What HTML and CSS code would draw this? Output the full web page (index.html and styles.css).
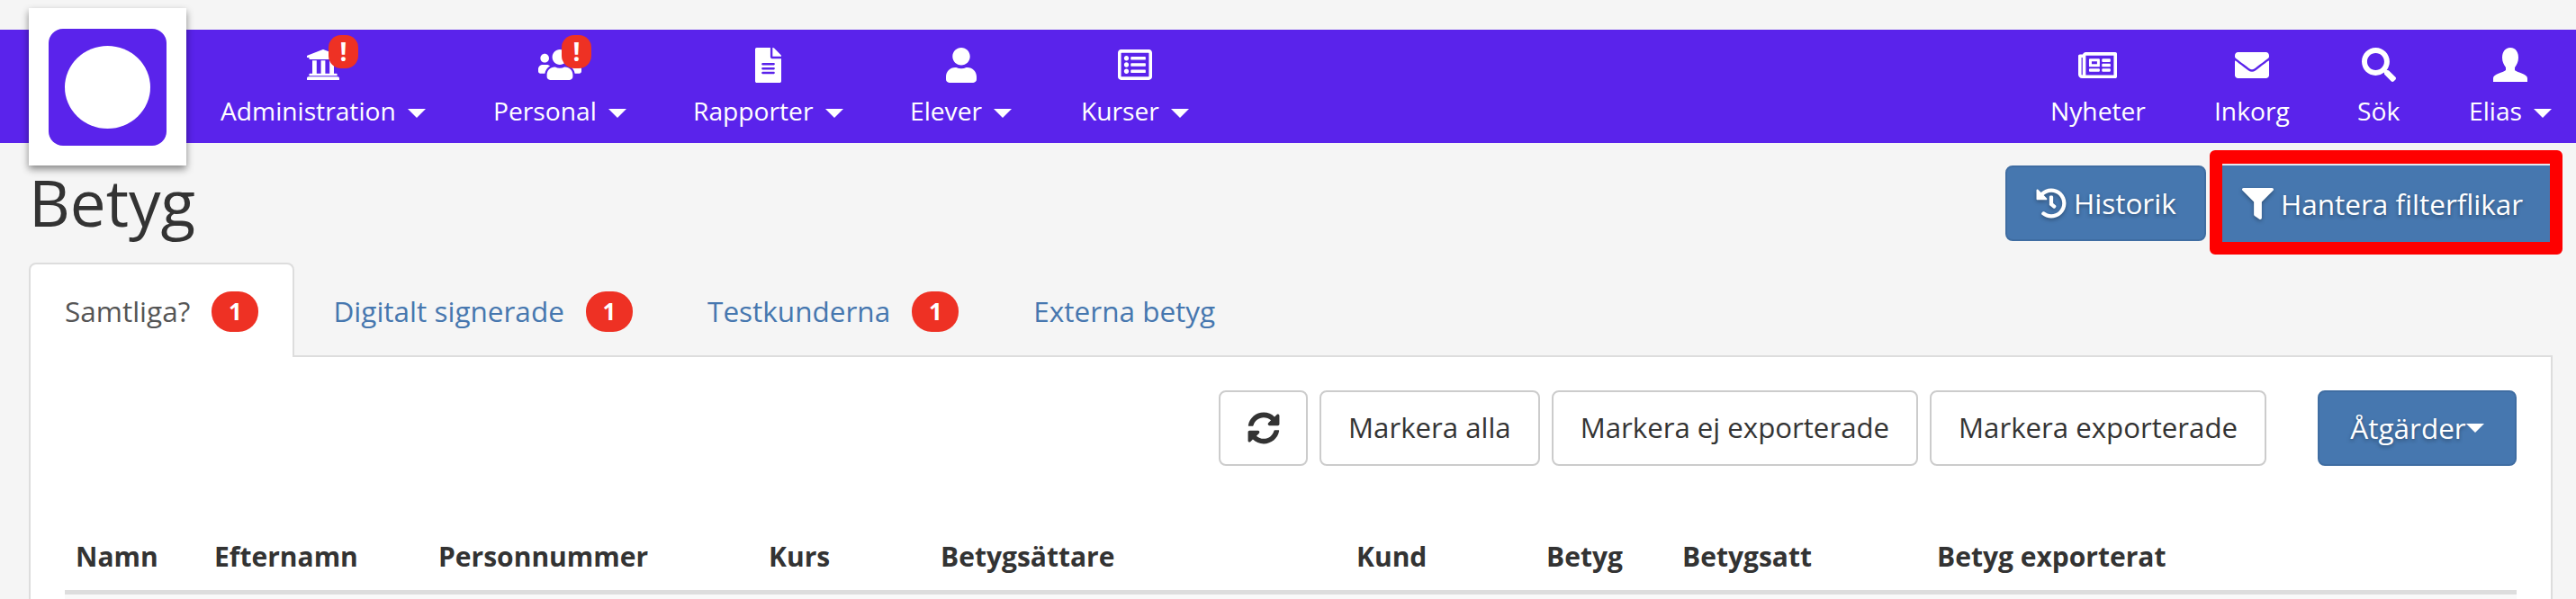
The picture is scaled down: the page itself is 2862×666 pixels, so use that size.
FILE: index.html
```html
<!DOCTYPE html>
<html lang="sv">
<head>
<meta charset="utf-8">
<title>Betyg</title>
<link rel="stylesheet" href="styles.css">
</head>
<body>
<header class="navbar">
  <a class="brand"><span class="brand-mark"><span class="brand-dot"></span></span></a>
  <nav class="menu">
    <a class="item"><span class="ico"><svg class="flag-uni" width="36" height="34" viewBox="16 32 480 448" preserveAspectRatio="none"><path fill="#fff" d="M496 128v16a8 8 0 0 1-8 8h-24v12c0 6.627-5.373 12-12 12H60c-6.627 0-12-5.373-12-12v-12H24a8 8 0 0 1-8-8v-16a8 8 0 0 1 4.941-7.392l232-88a7.996 7.996 0 0 1 6.118 0l232 88A8 8 0 0 1 496 128zm-24 304H40c-13.255 0-24 10.745-24 24v16a8 8 0 0 0 8 8h464a8 8 0 0 0 8-8v-16c0-13.255-10.745-24-24-24zM96 192v192H60c-6.627 0-12 5.373-12 12v20h416v-20c0-6.627-5.373-12-12-12h-36V192h-64v192h-64V192h-64v192h-64V192H96z"/></svg><b class="alert alert-a">!</b></span><span class="lab">Administration <i class="caret"></i></span></a>
    <a class="item"><span class="ico"><svg width="48" height="34" viewBox="0 32 640 448" preserveAspectRatio="none"><path fill="#fff" d="M96 224c35.300 0 64-28.700 64-64s-28.700-64-64-64-64 28.700-64 64 28.700 64 64 64zm448 0c35.300 0 64-28.700 64-64s-28.700-64-64-64-64 28.700-64 64 28.700 64 64 64zm32 32h-64c-17.600 0-33.500 7.100-45.100 18.600 40.300 22.100 68.900 62 75.100 109.400h66c17.700 0 32-14.300 32-32v-32c0-35.300-28.700-64-64-64zm-256 0c61.900 0 112-50.100 112-112S381.900 32 320 32 208 82.100 208 144s50.100 112 112 112zm76.800 32h-8.300c-20.800 10-43.900 16-68.500 16s-47.600-6-68.500-16h-8.300C179.600 288 128 339.600 128 403.200V432c0 26.500 21.500 48 48 48h288c26.500 0 48-21.500 48-48v-28.800c0-63.600-51.600-115.200-115.200-115.200zm-223.700-13.400C161.500 263.100 145.600 256 128 256H64c-35.300 0-64 28.700-64 64v32c0 17.700 14.300 32 32 32h65.900c6.300-47.400 34.900-87.300 75.200-109.400z"/></svg><b class="alert alert-p">!</b></span><span class="lab">Personal <i class="caret"></i></span></a>
    <a class="item"><span class="ico"><svg width="29" height="39" viewBox="0 0 384 512" preserveAspectRatio="none"><path fill="#fff" d="M224 136V0H24C10.700 0 0 10.700 0 24v464c0 13.300 10.700 24 24 24h336c13.300 0 24-10.700 24-24V160H248c-13.200 0-24-10.800-24-24zm64 236c0 6.600-5.400 12-12 12H108c-6.600 0-12-5.400-12-12v-8c0-6.600 5.400-12 12-12h168c6.600 0 12 5.400 12 12v8zm0-64c0 6.600-5.400 12-12 12H108c-6.600 0-12-5.400-12-12v-8c0-6.600 5.400-12 12-12h168c6.600 0 12 5.400 12 12v8zm0-72v8c0 6.600-5.400 12-12 12H108c-6.600 0-12-5.400-12-12v-8c0-6.600 5.400-12 12-12h168c6.600 0 12 5.400 12 12zm96-114.100v6.100H256V0h6.100c6.400 0 12.500 2.500 17 7l97.900 98c4.500 4.500 7 10.600 7 16.900z"/></svg></span><span class="lab">Rapporter <i class="caret"></i></span></a>
    <a class="item"><span class="ico"><svg width="34" height="39" viewBox="0 0 448 512" preserveAspectRatio="none"><path fill="#fff" d="M224 256c70.700 0 128-57.300 128-128S294.700 0 224 0 96 57.300 96 128s57.300 128 128 128zm89.600 32h-16.700c-22.200 10.200-46.900 16-72.900 16s-50.600-5.800-72.900-16h-16.700C60.200 288 0 348.200 0 422.400V464c0 26.500 21.500 48 48 48h352c26.500 0 48-21.500 48-48v-41.600c0-74.200-60.200-134.400-134.400-134.400z"/></svg></span><span class="lab">Elever <i class="caret"></i></span></a>
    <a class="item"><span class="ico"><svg width="38" height="34" viewBox="0 32 512 448" preserveAspectRatio="none"><path fill="#fff" d="M464 32H48C21.490 32 0 53.490 0 80v352c0 26.510 21.490 48 48 48h416c26.510 0 48-21.490 48-48V80c0-26.510-21.490-48-48-48zm-6 400H54a6 6 0 0 1-6-6V86a6 6 0 0 1 6-6h404a6 6 0 0 1 6 6v340a6 6 0 0 1-6 6zm-42-92v24c0 6.627-5.373 12-12 12H204c-6.627 0-12-5.373-12-12v-24c0-6.627 5.373-12 12-12h200c6.627 0 12 5.373 12 12zm0-96v24c0 6.627-5.373 12-12 12H204c-6.627 0-12-5.373-12-12v-24c0-6.627 5.373-12 12-12h200c6.627 0 12 5.373 12 12zm0-96v24c0 6.627-5.373 12-12 12H204c-6.627 0-12-5.373-12-12v-24c0-6.627 5.373-12 12-12h200c6.627 0 12 5.373 12 12zm-252 12c0 19.882-16.118 36-36 36s-36-16.118-36-36 16.118-36 36-36 36 16.118 36 36zm0 96c0 19.882-16.118 36-36 36s-36-16.118-36-36 16.118-36 36-36 36 16.118 36 36zm0 96c0 19.882-16.118 36-36 36s-36-16.118-36-36 16.118-36 36-36 36 16.118 36 36z"/></svg></span><span class="lab">Kurser <i class="caret"></i></span></a>
  </nav>
  <nav class="menu menu-right">
    <a class="item"><span class="ico"><svg width="43" height="29" viewBox="0 64 576 384" preserveAspectRatio="none"><path fill="#fff" d="M552 64H112c-20.858 0-38.643 13.377-45.248 32H24c-13.255 0-24 10.745-24 24v272c0 30.928 25.072 56 56 56h496c13.255 0 24-10.745 24-24V88c0-13.255-10.745-24-24-24zM48 392V144h16v248c0 4.411-3.589 8-8 8s-8-3.589-8-8zm480 8H111.422c.374-2.614.578-5.283.578-8V112h416v288zM172 280h136c6.627 0 12-5.373 12-12v-96c0-6.627-5.373-12-12-12H172c-6.627 0-12 5.373-12 12v96c0 6.627 5.373 12 12 12zm28-80h80v40h-80v-40zm-40 140v-24c0-6.627 5.373-12 12-12h136c6.627 0 12 5.373 12 12v24c0 6.627-5.373 12-12 12H172c-6.627 0-12-5.373-12-12zm192 0v-24c0-6.627 5.373-12 12-12h104c6.627 0 12 5.373 12 12v24c0 6.627-5.373 12-12 12H364c-6.627 0-12-5.373-12-12zm0-144v-24c0-6.627 5.373-12 12-12h104c6.627 0 12 5.373 12 12v24c0 6.627-5.373 12-12 12H364c-6.627 0-12-5.373-12-12zm0 72v-24c0-6.627 5.373-12 12-12h104c6.627 0 12 5.373 12 12v24c0 6.627-5.373 12-12 12H364c-6.627 0-12-5.373-12-12z"/></svg></span><span class="lab">Nyheter</span></a>
    <a class="item"><span class="ico"><svg width="38" height="29" viewBox="0 64 512 384" preserveAspectRatio="none"><path fill="#fff" d="M502.300 190.800c3.900-3.100 9.700-.2 9.700 4.700V400c0 26.500-21.500 48-48 48H48c-26.500 0-48-21.500-48-48V195.600c0-5 5.700-7.800 9.700-4.700 22.400 17.400 52.100 39.500 154.100 113.600 21.100 15.400 56.700 47.800 92.200 47.600 35.700.3 72-32.800 92.300-47.600 102-74.100 131.600-96.300 154-113.700zM256 320c23.200.4 56.600-29.200 73.400-41.400 132.700-96.300 142.800-104.700 173.400-128.700 5.800-4.500 9.200-11.500 9.200-18.900v-19c0-26.500-21.500-48-48-48H48C21.500 64 0 85.500 0 112v19c0 7.400 3.400 14.300 9.200 18.900 30.600 23.900 40.700 32.400 173.400 128.700 16.800 12.200 50.200 41.800 73.400 41.400z"/></svg></span><span class="lab">Inkorg</span></a>
    <a class="item"><span class="ico"><svg width="38" height="38" viewBox="0 0 512 512"><path fill="#fff" d="M505 442.700L405.300 343c-4.500-4.500-10.600-7-17-7H372c27.600-35.300 44-79.700 44-128C416 93.100 322.900 0 208 0S0 93.100 0 208s93.100 208 208 208c48.300 0 92.700-16.400 128-44v16.300c0 6.400 2.500 12.500 7 17l99.700 99.700c9.400 9.400 24.600 9.400 33.900 0l28.300-28.300c9.400-9.400 9.400-24.600.1-34zM208 336c-70.700 0-128-57.200-128-128 0-70.700 57.200-128 128-128 70.700 0 128 57.200 128 128 0 70.700-57.200 128-128 128z"/></svg></span><span class="lab">Sök</span></a>
    <a class="item"><span class="ico"><svg width="38" height="38" viewBox="0 0 38 38"><path fill="#fff" d="M19 0c6 0 9 5 9 11 0 5-2 8-4 11v3c3 3 14 4 14 9v4H0v-4c0-5 11-6 14-9v-3c-2-3-4-6-4-11 0-6 3-11 9-11z"/></svg></span><span class="lab">Elias <i class="caret"></i></span></a>
  </nav>
</header>

<div class="title-row">
  <h1 class="title">Betyg</h1>
  <div class="title-actions">
    <button class="btn btn-blue btn-shadow btn-hist"><svg class="btn-ico" width="34" height="34" viewBox="0 0 512 512"><path fill="#fff" d="M504 255.531c.253 136.640-111.180 248.372-247.820 248.468-59.015.042-113.223-20.530-155.822-54.911-11.077-8.940-11.905-25.541-1.839-35.607l11.267-11.267c8.609-8.609 22.353-9.551 31.891-1.984C173.062 425.135 212.781 440 256 440c101.705 0 184-82.311 184-184 0-101.705-82.311-184-184-184-48.814 0-93.149 18.969-126.068 49.932l50.754 50.754c10.080 10.080 2.941 27.314-11.313 27.314H24c-8.837 0-16-7.163-16-16V38.627c0-14.254 17.234-21.393 27.314-11.314l49.372 49.372C129.209 34.136 189.552 8 256 8c136.810 0 247.747 110.780 248 247.531zm-180.912 78.784l9.823-12.630c8.138-10.463 6.253-25.542-4.210-33.679L288 256.349V152c0-13.255-10.745-24-24-24h-16c-13.255 0-24 10.745-24 24v135.651l65.409 50.874c10.463 8.137 25.541 6.253 33.679-4.210z"/></svg>Historik</button>
    <span class="marked"><button class="btn btn-blue btn-shadow btn-filter"><svg class="btn-ico" width="35" height="35" viewBox="0 0 512 512"><path fill="#fff" d="M487.976 0H24.028C2.710 0-8.047 25.866 7.058 40.971L192 225.941V432c0 7.831 3.821 15.170 10.237 19.662l80 55.980C298.020 518.690 320 507.493 320 487.980V225.941l184.947-184.970C520.021 25.896 509.338 0 487.976 0z"/></svg>Hantera filterflikar</button></span>
  </div>
</div>

<ul class="tabs">
  <li class="tab tab-on">Samtliga? <span class="count">1</span></li>
  <li class="tab">Digitalt signerade <span class="count">1</span></li>
  <li class="tab">Testkunderna <span class="count">1</span></li>
  <li class="tab">Externa betyg</li>
</ul>

<section class="panel">
  <div class="toolbar">
    <button class="btn btn-plain btn-icon"><svg width="36" height="36" viewBox="0 0 512 512"><path fill="#333" d="M370.720 133.280C339.458 104.008 298.888 87.962 255.848 88c-77.458.068-144.328 53.178-162.791 126.850-1.344 5.363-6.122 9.150-11.651 9.150H24.103c-7.498 0-13.194-6.807-11.807-14.176C33.933 94.924 134.813 8 256 8c66.448 0 126.791 26.136 171.315 68.685L463.030 40.970C478.149 25.851 504 36.559 504 57.941V192c0 13.255-10.745 24-24 24H345.941c-21.382 0-32.090-25.851-16.971-40.971l41.750-41.749zM32 296h134.059c21.382 0 32.090 25.851 16.971 40.971l-41.750 41.750c31.262 29.273 71.835 45.319 114.876 45.280 77.418-.070 144.315-53.144 162.787-126.849 1.344-5.363 6.122-9.150 11.651-9.150h57.304c7.498 0 13.194 6.807 11.807 14.176C478.067 417.076 377.187 504 256 504c-66.448 0-126.791-26.136-171.315-68.685L48.970 471.030C33.851 486.149 8 475.441 8 454.059V320c0-13.255 10.745-24 24-24z"/></svg></button>
    <button class="btn btn-plain">Markera alla</button>
    <button class="btn btn-plain">Markera ej exporterade</button>
    <button class="btn btn-plain">Markera exporterade</button>
    <button class="btn btn-blue btn-shadow btn-act">Åtgärder <i class="caret caret-act"></i></button>
  </div>
  <div class="thead">
    <span class="th w-namn">Namn</span>
    <span class="th w-efter">Efternamn</span>
    <span class="th w-pers">Personnummer</span>
    <span class="th w-kurs">Kurs</span>
    <span class="th w-satt">Betygsättare</span>
    <span class="th w-kund">Kund</span>
    <span class="th w-bet">Betyg</span>
    <span class="th w-datum">Betygsatt</span>
    <span class="th">Betyg exporterat</span>
  </div>
  <div class="row-strip"></div>
</section>
</body>
</html>
```
FILE: styles.css
```css
* { box-sizing: border-box; }
html, body { height: 100%; }
body {
  margin: 0;
  background: #f5f5f5;
  color: #333;
  font-family: "Open Sans", "Noto Sans", sans-serif;
  font-size: 28px;
  overflow: hidden;
}
.navbar {
  display: flex;
  justify-content: space-between;
  height: 126px;
  margin-top: 33px;
  padding-left: 245px;
  background: #5a23eb;
  color: #fff;
  position: relative;
}
.brand {
  position: absolute;
  left: 32px;
  top: -24px;
  width: 175px;
  height: 175px;
  background: #fff;
  box-shadow: 0 4px 8px rgba(0,0,0,.45);
  display: flex;
  align-items: center;
  justify-content: center;
}
.brand-mark {
  width: 131px;
  height: 130px;
  border-radius: 16px;
  background: #5a23eb;
  display: flex;
  align-items: center;
  justify-content: center;
}
.brand-dot { width: 95px; height: 92px; border-radius: 50%; background: #fff; }
.menu { display: grid; grid-template-columns: 303px 222px 241px 190px auto; justify-items: start; }
.menu-right { grid-template-columns: 182px 159px 124px 93px; padding-right: 26px; }
.item {
  display: flex;
  flex-direction: column;
  align-items: center;
  padding-top: 19px;
}
.ico {
  position: relative;
  height: 40px;
  display: flex;
  align-items: center;
  margin-bottom: 10px;
}
.lab { font-size: 28.200px; line-height: 42px; white-space: nowrap; }
.alert {
  position: absolute;
  top: -13px;
  width: 33px;
  height: 37px;
  border-radius: 14px;
  background: #ee3124;
  color: #fff;
  font: 700 28px/37px "Open Sans", sans-serif;
  text-align: center;
}
.alert-a { right: -21px; }
.alert-p { right: -11px; }
.caret {
  display: inline-block;
  width: 0;
  height: 0;
  margin-left: 6px;
  vertical-align: 3px;
  border-left: 10px solid transparent;
  border-right: 10px solid transparent;
  border-top: 10px solid #fff;
}
.caret-act { margin-left: 0; }
.title-row {
  display: flex;
  justify-content: space-between;
  padding: 0 15px 0 32px;
  height: 133px;
}
.title { margin: 27px 0 0; font-size: 71px; font-weight: 400; line-height: 78px; }
.title-actions { display: flex; align-items: flex-start; gap: 4px; padding-top: 25px; }
.btn {
  height: 84px;
  padding: 0 30px;
  font: 400 31.200px/1 "Open Sans", sans-serif;
  border-radius: 8px;
  display: inline-flex;
  align-items: center;
  white-space: nowrap;
}
.btn-blue { background: #4677af; border: 2px solid #3f6da2; color: #fff; font-size: 31.500px; }
.btn-shadow { text-shadow: 0 2px 4px rgba(0,0,0,.35); }
.btn-plain { background: #fff; border: 2px solid #ccc; color: #333; }
.btn-hist { width: 223px; padding: 0 0 0 32px; }
.btn-ico { margin-right: 8px; flex: none; filter: drop-shadow(0 2px 2px rgba(0,0,0,.3)); }
.marked {
  display: block;
  border: 14px solid #fe0000;
  border-top-width: 15px;
  border-radius: 6px;
  margin-top: -17px;
}
.btn-filter {
  border-radius: 0;
  border-width: 2px 0 0;
  border-top-color: #e4e8ee;
  width: 364px;
  height: 87px;
  padding: 0 0 0 22px;
}
.tabs {
  display: flex;
  margin: 0 0 0 32px;
  padding: 0;
  list-style: none;
  height: 103px;
  font-size: 31.500px;
}
.tab {
  padding: 30px 38px 0;
  margin-right: 3px;
  border: 2px solid transparent;
  border-bottom: 0;
  color: #4677af;
  line-height: 44px;
  white-space: nowrap;
}
.tab-on {
  color: #555;
  background: #fff;
  border-color: #ddd;
  border-radius: 8px 8px 0 0;
  position: relative;
  z-index: 1;
  height: 105px;
}
.count {
  display: inline-block;
  width: 52px;
  height: 45px;
  margin-left: 16px;
  border-radius: 22px;
  background: #ee3124;
  color: #fff;
  text-align: center;
  font: 700 26px/45px "Open Sans", sans-serif;
  vertical-align: top;
}
.panel {
  margin: 0 26px 0 32px;
  padding: 0 38px;
  background: #fff;
  border: 2px solid #ddd;
  border-bottom: 0;
  height: 271px;
}
.toolbar {
  display: flex;
  justify-content: flex-end;
  gap: 13px;
  padding-top: 37px;
}
.btn-icon { width: 99px; justify-content: center; padding: 0; }
.btn-act { margin-left: 44px; width: 221px; justify-content: center; padding: 0; }
.thead {
  display: flex;
  margin-top: 81px;
  height: 62px;
  padding-left: 12px;
  border-bottom: 5px solid #ddd;
  align-items: flex-start;
}
.th { font-size: 30px; font-weight: 700; line-height: 40px; white-space: nowrap; }
.w-namn { width: 154px; }
.w-efter { width: 249px; }
.w-pers { width: 367px; }
.w-kurs { width: 191px; }
.w-satt { width: 462px; }
.w-kund { width: 211px; }
.w-bet { width: 151px; }
.w-datum { width: 283px; }
.row-strip { height: 5px; background: #f9f9f9; }
```
